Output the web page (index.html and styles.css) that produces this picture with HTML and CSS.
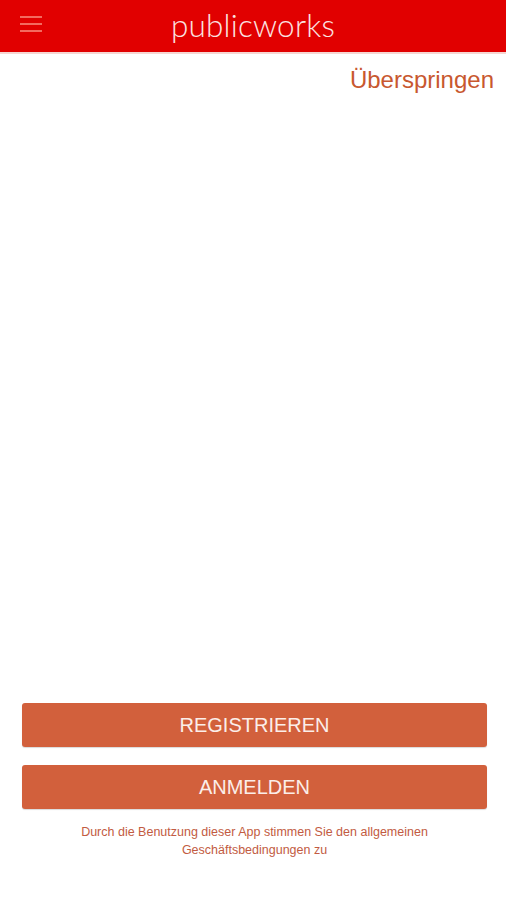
FILE: index.html
```html
<!DOCTYPE html>
<html lang="de">
<head>
    <meta charset="UTF-8">
    <meta name="viewport" content="width=device-width, initial-scale=1.0">
    <title>publicworks</title>
    <link rel="stylesheet" href="styles.css">
</head>
<body>

    <header class="topbar">
        <button class="menu-btn" aria-label="Menü">
            <span></span><span></span><span></span>
        </button>
        <h1 class="brand">publicworks</h1>
    </header>

    <main class="page">
        <div class="skip-row">
            <a href="#" class="skip">Überspringen</a>
        </div>

        <div class="actions">
            <button class="action">REGISTRIEREN</button>
            <button class="action">ANMELDEN</button>
            <p class="terms">Durch die Benutzung dieser App stimmen Sie den allgemeinen<br>Geschäftsbedingungen zu</p>
        </div>
    </main>

</body>
</html>
```

FILE: styles.css
```css
body {
    margin: 0;
    font-family: "Liberation Sans", Arial, sans-serif;
    background: #fff;
    color: #333;
}
.topbar {
    height: 52px;
    background: #e10000;
    border-bottom: 2px solid #f6d6d2;
    display: flex;
    align-items: center;
    justify-content: center;
    position: relative;
}
.menu-btn {
    position: absolute;
    left: 20px;
    top: 16px;
    width: 22px;
    padding: 0;
    border: none;
    background: none;
    display: flex;
    flex-direction: column;
    gap: 5px;
}
.menu-btn span {
    display: block;
    height: 2px;
    background: #f36a5f;
}
.brand {
    margin: 0;
    font-family: Lato, "Open Sans", sans-serif;
    font-weight: 300;
    font-size: 31.5px;
    color: #fbe3e0;
    letter-spacing: 0.2px;
    padding-bottom: 2px;
}
.page {
    height: 846px;
    display: flex;
    flex-direction: column;
}
.skip-row {
    display: flex;
    justify-content: flex-end;
    padding: 12px 12px 0 0;
}
.skip {
    font-size: 24px;
    color: #c8582f;
    text-decoration: none;
}
.actions {
    margin-top: auto;
    padding: 0 19px 41px 22px;
    display: flex;
    flex-direction: column;
    gap: 18px;
}
.action {
    height: 44px;
    border: none;
    border-radius: 3px;
    background: #d2603c;
    color: #fbeee9;
    font-family: "Liberation Sans", Arial, sans-serif;
    font-size: 20px;
    box-shadow: 0 1px 1px rgba(0, 0, 0, 0.15);
}
.terms {
    margin: -4px 0 0;
    text-align: center;
    font-size: 12.5px;
    line-height: 18px;
    color: #c25b42;
}
```
